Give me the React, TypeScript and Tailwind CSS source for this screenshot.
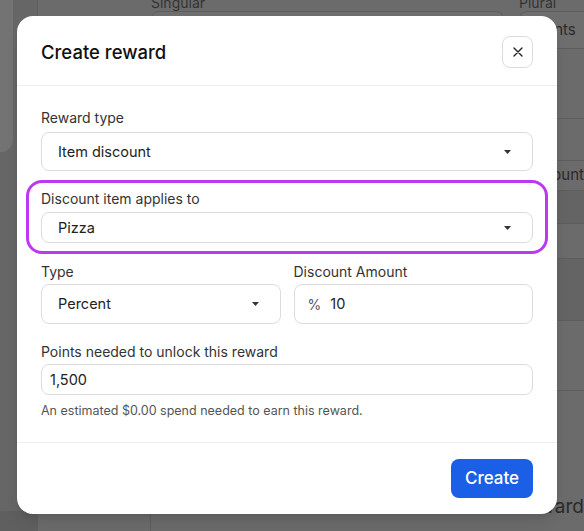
import { ReactNode } from "react";

function Caret() {
  return (
    <svg width="7" height="4" viewBox="0 0 7 4" aria-hidden="true">
      <path d="M0 0h7L3.5 4Z" fill="#333" />
    </svg>
  );
}

function SelectBox({ value, height }: { value: string; height: string }) {
  return (
    <div
      className={`flex ${height} items-center justify-between rounded-lg border border-[#dcdcdc] bg-white pl-4 pr-[21px] text-[14.5px] text-[#222]`}
    >
      <span>{value}</span>
      <Caret />
    </div>
  );
}

function Label({ children }: { children: ReactNode }) {
  return <div className="text-[14px] leading-5 text-[#333]">{children}</div>;
}

function BackgroundPage() {
  return (
    <div className="flex h-[531px] w-full">
      <div className="flex w-[38px] shrink-0 flex-col border-r border-[#5f5f5f] bg-[#666]">
        <div className="h-[152px] w-[13px] rounded-br-xl bg-[#737373]" />
        <div className="flex-1" />
        <div className="h-[20px] bg-[#5f5f5f]" />
      </div>
      <div className="flex flex-1 flex-col">
        <div className="flex gap-[15px] pl-[113px]">
          <div className="w-[353px]">
            <div className="-mt-[7px] text-[14px] leading-5 text-[#333]">Singular</div>
            <div className="mt-[-2px] h-[38px] rounded-lg border border-[#5e5e5e] bg-[#6e6e6e]" />
          </div>
          <div className="flex-1">
            <div className="-mt-[7px] text-[14px] leading-5 text-[#333]">Plural</div>
            <div className="mt-[-2px] flex h-[38px] items-center rounded-l-lg border border-r-0 border-[#5e5e5e] bg-[#6e6e6e] pl-3 text-[15px] text-[#2a2a2a]">
              Points
            </div>
          </div>
        </div>
        <div className="flex flex-1">
          <div className="w-[113px] border-r border-[#5e5e5e]" />
          <div className="flex flex-1 flex-col">
            <div className="h-[70px] border-b border-[#5e5e5e]" />
            <div className="h-[42px] border-b border-[#5e5e5e]" />
            <div className="flex h-[30px] items-center justify-end border-b border-[#5e5e5e] text-[15px] text-[#2a2a2a]">
              Discount
            </div>
            <div className="h-[33px] border-b border-[#5e5e5e] bg-[#646464]" />
            <div className="h-[35px] border-b border-[#5e5e5e]" />
            <div className="h-[62px] border-b border-[#5e5e5e] bg-[#646464]" />
            <div className="h-[70px] border-b border-[#5e5e5e]" />
            <div className="flex flex-1 items-end justify-end pb-[10px] text-[19px] text-[#2a2a2a]">Reward</div>
          </div>
        </div>
      </div>
    </div>
  );
}

export default function App() {
  return (
    <div
      className="relative h-[531px] w-full overflow-hidden bg-[#6b6b6b]"
      style={{ fontFamily: "Inter, 'Noto Sans', sans-serif" }}
    >
      <BackgroundPage />

      <div className="absolute left-[17px] top-[16px] flex w-[540px] flex-col rounded-2xl bg-white shadow-lg">
        <div className="flex h-[70px] items-center justify-between border-b border-[#eeeeee] px-6 pt-[2px]">
          <h2 className="mt-[3px] text-[18.5px] font-medium text-[#111]">Create reward</h2>
          <button
            type="button"
            className="flex h-[32px] w-[31px] items-center justify-center rounded-lg border border-[#dcdcdc] bg-white"
          >
            <svg width="10" height="10" viewBox="0 0 10 10" aria-hidden="true">
              <path d="M1 1l8 8M9 1l-8 8" stroke="#222" strokeWidth="1.4" strokeLinecap="round" />
            </svg>
          </button>
        </div>

        <div className="flex flex-col px-6 pb-[23px] pt-[22px]">
          <Label>Reward type</Label>
          <div className="mt-1">
            <SelectBox value="Item discount" height="h-[39px]" />
          </div>

          <div className="-mx-[15px] mt-[9px] rounded-2xl border-[3px] border-[#bd38f3] px-3 pb-2 pt-[6px]">
            <Label>Discount item applies to</Label>
            <div className="mt-[3px]">
              <SelectBox value="Pizza" height="h-[31px]" />
            </div>
          </div>

          <div className="mt-2 grid grid-cols-2 gap-[13px]">
            <div>
              <Label>Type</Label>
              <div className="mt-[2px]">
                <SelectBox value="Percent" height="h-10" />
              </div>
            </div>
            <div>
              <Label>Discount Amount</Label>
              <div className="mt-[2px] flex h-10 items-center gap-[9px] rounded-lg border border-[#dcdcdc] bg-white pl-[13px] text-[14.5px] text-[#222]">
                <span className="text-[14px] text-[#555]">%</span>
                <span>10</span>
              </div>
            </div>
          </div>

          <div className="mt-[18px]">
            <Label>Points needed to unlock this reward</Label>
            <div className="mt-[2px] flex h-[31px] items-center rounded-lg border border-[#dcdcdc] bg-white pl-2 text-[14.5px] text-[#222]">
              1,500
            </div>
            <div className="mt-2 text-[12.5px] leading-4 text-[#555]">
              An estimated $0.00 spend needed to earn this reward.
            </div>
          </div>
        </div>

        <div className="flex justify-end border-t border-[#eeeeee] px-6 pb-4 pt-[16px]">
          <button
            type="button"
            className="h-[39px] w-[82px] rounded-lg bg-[#1a5fe5] text-[17px] font-medium text-white"
          >
            Create
          </button>
        </div>
      </div>
    </div>
  );
}
